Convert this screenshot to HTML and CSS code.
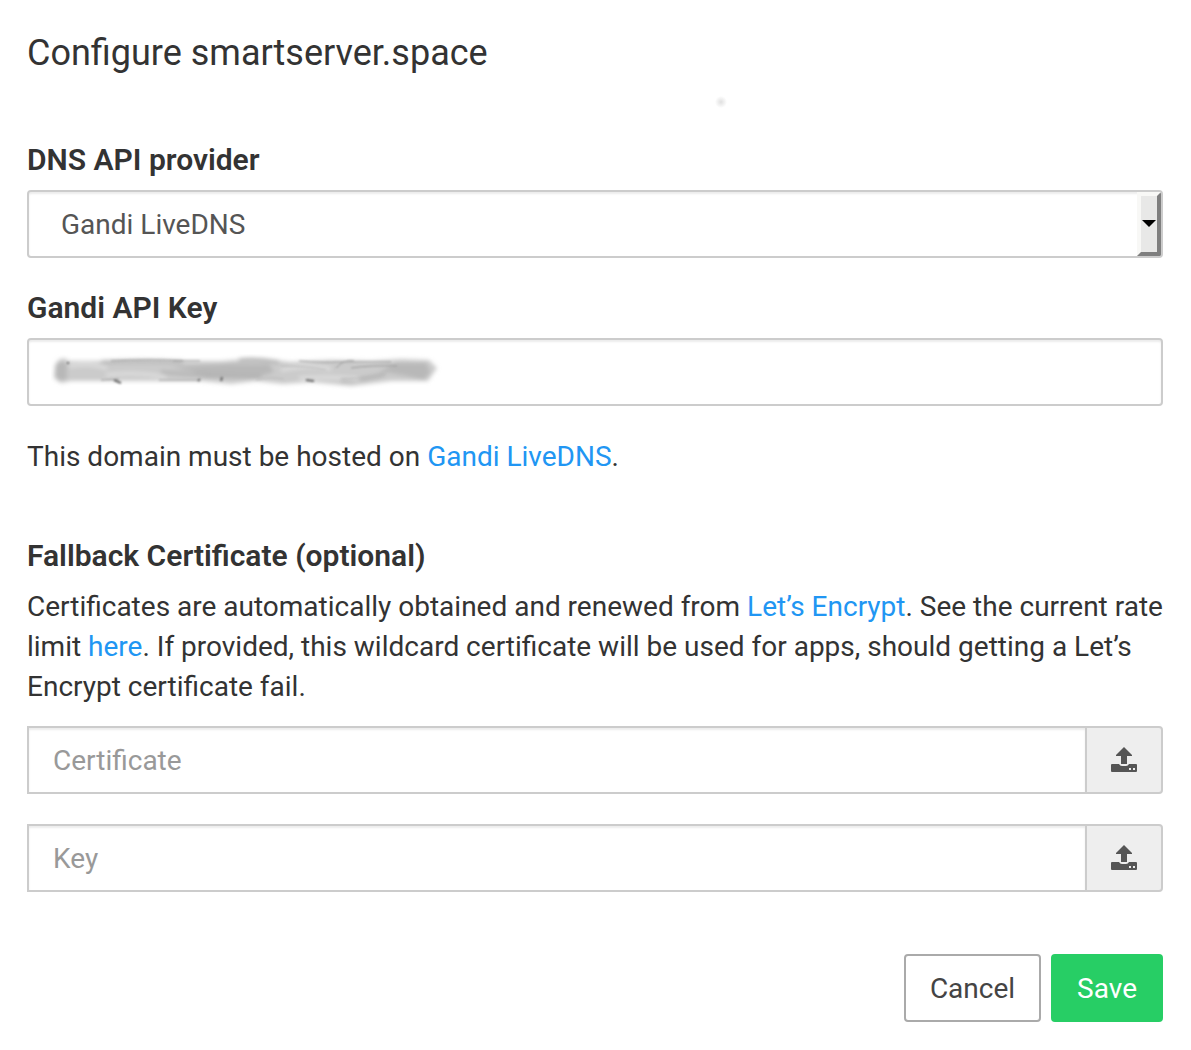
FILE: index.html
```html
<!DOCTYPE html>
<html lang="en">
<head>
<meta charset="utf-8">
<meta name="viewport" content="width=device-width, initial-scale=1">
<title>Configure smartserver.space</title>
<link rel="stylesheet" href="styles.css">
</head>
<body>
<main class="dialog">
  <header class="dialog-header">
    <h1 class="title">Configure smartserver.space</h1>
    <span class="speck"></span>
  </header>
  <form class="form">
    <div class="field">
      <label class="label" for="provider">DNS API provider</label>
      <div class="select-wrap">
        <select class="control select" id="provider"><option>Gandi LiveDNS</option></select>
        <span class="select-arrow"><svg width="14" height="8" viewBox="0 0 14 8" aria-hidden="true"><path d="M0 0h14L7 7z"/></svg></span>
      </div>
    </div>
    <div class="field">
      <label class="label" for="api-key">Gandi API Key</label>
      <div class="key-wrap">
        <input class="control" id="api-key" type="text">
        <svg class="smudge" width="392" height="36" viewBox="0 0 392 36" aria-hidden="true">
          <defs>
            <filter id="soft" x="-5%" y="-30%" width="110%" height="160%"><feGaussianBlur stdDeviation="2"/></filter>
            <filter id="fine" x="-5%" y="-30%" width="110%" height="160%"><feGaussianBlur stdDeviation="0.9"/></filter>
          </defs>
          <g filter="url(#soft)">
            <path fill="#cbcbcb" d="M4 11Q10 0 18 7L50 7 75 6 130 7 170 7 205 4 240 8 280 6 320 7 350 5 378 6 386 14 377 27 340 27 300 32 260 28 232 30 205 27 180 30 150 27 90 27 65 27 20 27 10 29 3 24z"/>
            <path fill="#b8b8b8" d="M5 11q5-6 11-1v15l-8 2-4-6zM120 13l60-3 38 0 5 8-20 6-48 0-12-6zM345 9l30 0 4 9-6 8-17-4-27-5z"/>
            <path fill="none" stroke="#b0b0b0" stroke-width="3" d="M50 8q40-2 82 0M188 6q18-2 40 2M290 27q25-1 44-7M110 18q50 5 100 5"/>
            <path fill="none" stroke="#e0e0e0" stroke-width="3" d="M18 12q20-4 38 2M55 21q30-4 60 2M230 16q28-6 50-1M248 24q30-2 60 1"/>
          </g>
          <g filter="url(#fine)" fill="none" stroke="#999">
            <path d="M60 7q40-2 72 0M122 7h27M248 7q24 2 40 1h52M285 14q8-9 18-7M300 14q20-3 46-2M50 26l18-1M108 26h40"/>
            <path stroke="#666" stroke-width="2" d="M63 26l7 3M255 26l8 1M147 27l2-2M170 27l1-4M17 8v2"/>
            <path stroke="#bbb" d="M205 26q14-4 28-1M230 12q25 0 45 4M290 25q22 0 45-5"/>
          </g>
        </svg>
      </div>
    </div>
    <p class="text">This domain must be hosted on <a class="link" href="#">Gandi LiveDNS</a>.</p>
    <section class="certificates">
      <h2 class="label">Fallback Certificate (optional)</h2>
      <p class="text">Certificates are automatically obtained and renewed from <a class="link" href="#">Let’s Encrypt</a>. See the current rate limit <a class="link" href="#">here</a>. If provided, this wildcard certificate will be used for apps, should getting a Let’s Encrypt certificate fail.</p>
      <div class="uploads">
        <div class="upload">
          <input class="control upload-input" type="text" placeholder="Certificate" aria-label="Certificate">
          <button class="upload-button" type="button" aria-label="Upload certificate">
            <svg width="26" height="26" viewBox="0 0 26 26" aria-hidden="true"><path fill="#555" fill-rule="evenodd" d="M13 0l8 8v1h-5v8h-6V9H5V8zM1 17h7q1 2 3 2h4q2 0 3-2h7q1 0 1 1v6q0 1-1 1H1q-1 0-1-1v-6q0-1 1-1zm17 4v2h2v-2zm4 0v2h2v-2z"/></svg>
          </button>
        </div>
        <div class="upload">
          <input class="control upload-input" type="text" placeholder="Key" aria-label="Key">
          <button class="upload-button" type="button" aria-label="Upload key">
            <svg width="26" height="26" viewBox="0 0 26 26" aria-hidden="true"><path fill="#555" fill-rule="evenodd" d="M13 0l8 8v1h-5v8h-6V9H5V8zM1 17h7q1 2 3 2h4q2 0 3-2h7q1 0 1 1v6q0 1-1 1H1q-1 0-1-1v-6q0-1 1-1zm17 4v2h2v-2zm4 0v2h2v-2z"/></svg>
          </button>
        </div>
      </div>
    </section>
    <footer class="actions">
      <button class="button" type="button">Cancel</button>
      <button class="button button-save" type="submit">Save</button>
    </footer>
  </form>
</main>
</body>
</html>
```
FILE: styles.css
```css
* {
  box-sizing: border-box;
}

body {
  margin: 0;
  background: #fff;
  color: #333;
  font-family: Roboto, sans-serif;
  font-size: 28px;
  line-height: 40px;
}

.dialog {
  padding: 29px 28px 28px 27px;
}

.dialog-header {
  position: relative;
  margin-bottom: 63px;
}

.title {
  margin: 0;
  font-size: 36px;
  font-weight: 400;
  line-height: 48px;
}

.speck {
  position: absolute;
  top: 61px;
  left: 60%;
  width: 24px;
  height: 24px;
  background: radial-gradient(circle, #e0e0e0, #fff 6px);
}

.form {
  display: flex;
  flex-direction: column;
  gap: 30px;
}

.field {
  display: flex;
  flex-direction: column;
  gap: 10px;
}

.label {
  margin: 0;
  font-size: 30px;
  font-weight: 600;
}

.control {
  display: block;
  width: 100%;
  height: 68px;
  padding: 0 24px;
  border: 2px solid #ccc;
  border-radius: 4px;
  background: #fff;
  box-shadow: inset 0 2px 2px rgba(0, 0, 0, 0.08);
  color: #555;
  font: inherit;
}

.control::placeholder {
  color: #999;
  opacity: 1;
}

.select-wrap,
.key-wrap {
  position: relative;
}

.select {
  padding: 2px 32px 0;
  appearance: none;
}

.select-arrow {
  position: absolute;
  top: 2px;
  right: 2px;
  bottom: 2px;
  display: flex;
  align-items: center;
  justify-content: center;
  width: 24px;
  border: 4px solid;
  border-color: #f8f8f6 #7f7f7f #7f7f7f #f8f8f6;
  border-radius: 0 2px 2px 0;
  background: #e8e8e7;
  pointer-events: none;
}

.select-arrow svg {
  flex: none;
}

.smudge {
  position: absolute;
  top: 16px;
  left: 24px;
  pointer-events: none;
}

.text {
  margin: 0;
  padding-top: 1px;
}

.link {
  color: #2196f3;
  text-decoration: none;
}

.certificates {
  display: flex;
  flex-direction: column;
  gap: 10px;
  margin-top: 29px;
}

.uploads {
  display: flex;
  flex-direction: column;
  gap: 30px;
  margin-top: 9px;
}

.upload {
  display: flex;
}

.upload-input {
  flex: 1;
  min-width: 0;
  border-right: 0;
  border-radius: 0;
}

.upload-button {
  display: flex;
  align-items: center;
  justify-content: center;
  width: 78px;
  padding: 0;
  border: 2px solid #ccc;
  border-radius: 0 4px 4px 0;
  background: #eee;
}

.actions {
  display: flex;
  justify-content: flex-end;
  gap: 10px;
  margin-top: 32px;
}

.button {
  height: 68px;
  padding: 2px 24px 0;
  border: 2px solid #aaa;
  border-radius: 4px;
  background: #fff;
  color: #444;
  font: inherit;
}

.button-save {
  border-color: #27ce65;
  background: #27ce65;
  color: #fff;
}
```
